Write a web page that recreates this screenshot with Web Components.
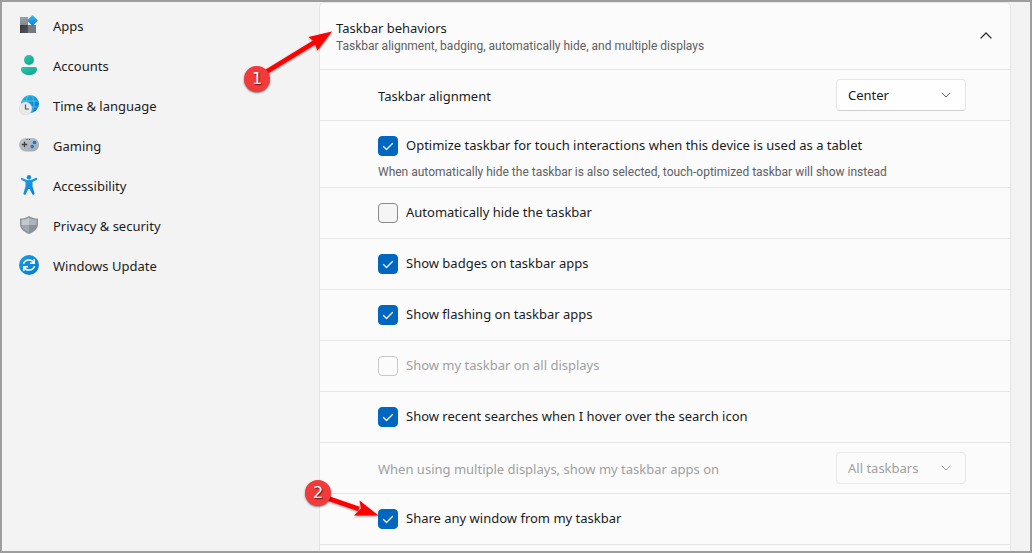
<!DOCTYPE html>
<html lang="en">
<head>
<meta charset="utf-8">
<title>Settings - Taskbar</title>
<style>
  html, body { margin: 0; height: 100%; }
  body { font: 13px/20px "Noto Sans", "Open Sans", sans-serif; color: #1b1b1b; background: #f3f3f3; overflow: hidden; }
</style>
</head>
<body>
<settings-window>
  <nav-item slot="nav" icon="apps">Apps</nav-item>
  <nav-item slot="nav" icon="accounts">Accounts</nav-item>
  <nav-item slot="nav" icon="time">Time &amp; language</nav-item>
  <nav-item slot="nav" icon="gaming">Gaming</nav-item>
  <nav-item slot="nav" icon="access">Accessibility</nav-item>
  <nav-item slot="nav" icon="privacy">Privacy &amp; security</nav-item>
  <nav-item slot="nav" icon="update">Windows Update</nav-item>

  <settings-expander heading="Taskbar behaviors" note="Taskbar alignment, badging, automatically hide, and multiple displays">
    <select-setting label="Taskbar alignment" options="Center|Left"></select-setting>
    <check-setting checked label="Optimize taskbar for touch interactions when this device is used as a tablet" note="When automatically hide the taskbar is also selected, touch-optimized taskbar will show instead"></check-setting>
    <check-setting label="Automatically hide the taskbar"></check-setting>
    <check-setting checked label="Show badges on taskbar apps"></check-setting>
    <check-setting checked label="Show flashing on taskbar apps"></check-setting>
    <check-setting disabled label="Show my taskbar on all displays"></check-setting>
    <check-setting checked label="Show recent searches when I hover over the search icon"></check-setting>
    <select-setting disabled label="When using multiple displays, show my taskbar apps on" options="All taskbars"></select-setting>
    <check-setting checked label="Share any window from my taskbar"></check-setting>
    <step-marker slot="markers" class="one" step="1"></step-marker>
    <step-marker slot="markers" class="two" step="2"></step-marker>
  </settings-expander>
</settings-window>

<script>
const ICONS = {
  apps: `<defs><linearGradient id="a" x2="0" y2="1"><stop stop-color="#9aa0a8"/><stop offset="1" stop-color="#838990"/></linearGradient><linearGradient id="b" y2="1"><stop stop-color="#33c1f5"/><stop offset="1" stop-color="#0a79d8"/></linearGradient><linearGradient id="c" y2="1"><stop stop-color="#34363a"/><stop offset="1" stop-color="#55585d"/></linearGradient></defs>
    <path fill="url(#a)" d="M1 2h8v8H1z"/><path fill="url(#c)" d="M1 10h8v8H1z"/><path fill="#747a82" d="M9 10h8v8H9z"/><rect x="9.600" y="1.600" width="7.800" height="7.800" rx=".8" fill="url(#b)" transform="rotate(45 13.500 5.500)"/>`,
  accounts: `<defs><linearGradient id="a" x2="1" y2="1"><stop stop-color="#2cc7b0"/><stop offset="1" stop-color="#10a38b"/></linearGradient></defs>
    <circle cx="10" cy="5" r="5" fill="url(#a)"/><path fill="url(#a)" d="M4 12h12a2 2 0 0 1 2 2c0 4-4 6-8 6s-8-2-8-6a2 2 0 0 1 2-2z"/>`,
  time: `<defs><linearGradient id="a" x2="1" y2="1"><stop stop-color="#23b7e6"/><stop offset="1" stop-color="#0872c9"/></linearGradient></defs>
    <circle cx="11" cy="9" r="9" fill="url(#a)"/><g fill="none" stroke="#5fd8f3" stroke-width=".7"><ellipse cx="11" cy="9" rx="4" ry="9"/><path d="M3 6h16M3 12h16"/></g>
    <circle cx="6.500" cy="13.500" r="6.500" fill="#e9e9ea" stroke="#cfcfd1" stroke-width=".4"/><path d="M6.500 9.500v4.500h3.500" fill="none" stroke="#54565a" stroke-width="1.200"/>`,
  gaming: `<defs><linearGradient id="a" y2="1"><stop stop-color="#c3c8cf"/><stop offset="1" stop-color="#a0a6ae"/></linearGradient></defs>
    <rect y="3" width="20" height="13.500" rx="6.500" fill="url(#a)"/><path d="M2.800 9.500h5.400M5.500 6.800v5.400" stroke="#3c3f44" stroke-width="1.300"/><circle cx="15.500" cy="7.500" r="1.800" fill="#1078cf"/><circle cx="13.200" cy="11.500" r="1.700" fill="#1078cf"/><path d="M7.500 4.500h1M10 4.500h1" stroke="#44474c"/>`,
  access: `<defs><linearGradient id="a" y2="1"><stop stop-color="#25a3e8"/><stop offset="1" stop-color="#087bd4"/></linearGradient></defs>
    <circle cx="10" cy="2.200" r="2.200" fill="#128ade"/><path fill="url(#a)" d="M3.300 2.900L8 5h4l4.700-2.100c1.400-.5 2 1.400.8 2L13.500 7v4.200l2 7c.3 1.600-1.700 2.300-2.300.8L10.600 14H9.400l-2.600 5c-.6 1.500-2.600.8-2.300-.8l2-7V7l-4-2.100c-1.200-.6-.6-2.500.8-2z"/>`,
  privacy: `<path fill="#8b929a" d="M10 1c3 2 6 2.500 9 2.500V9c0 5-4 8-9 10-5-2-9-5-9-10V3.500C4 3.500 7 3 10 1z"/><path fill="#aeb4bb" d="M10 2.800c2 1.300 4.800 1.900 7.500 2V10H10z"/><path fill="#c3c8cd" d="M10 2.800v7.200H2.500V4.800c2.700-.1 5.500-.7 7.500-2z"/><path fill="#a1a7af" d="M2.500 10H10v7.400C6 15.800 3 13.500 2.500 10z"/><path fill="#8a9199" d="M17.500 10H10v7.400c4-1.600 7-3.900 7.500-7.400z"/>`,
  update: `<defs><linearGradient id="a" x2="1" y2="1"><stop stop-color="#18a0e4"/><stop offset="1" stop-color="#0877d0"/></linearGradient></defs>
    <circle cx="10" cy="10" r="10" fill="url(#a)"/><g fill="none" stroke="#fff" stroke-width="1.500"><path d="M4.500 8.700C5.500 6 7.500 4.900 10 4.900c2 0 3.700 1 4.700 2.800M15.200 4v4.300H11M15.500 11.300c-1 2.700-3 3.800-5.500 3.800-2 0-3.700-1-4.700-2.800M4.800 16v-4.300H9"/></g>`
};

const CHEVRON_DOWN = `<svg viewBox="0 0 10 6" aria-hidden="true"><path d="M1 1l4 4 4-4" fill="none" stroke="currentColor" stroke-linecap="round"/></svg>`;

class BaseElement extends HTMLElement {
  connectedCallback() {
    if (this.shadowRoot) return;
    this.attachShadow({ mode: "open" }).innerHTML = this.render();
  }
  attr(name) { return this.getAttribute(name) || ""; }
}

customElements.define("settings-window", class extends BaseElement {
  render() {
    return `<style>
      :host { display: flex; box-sizing: border-box; height: 100vh; overflow: hidden; border: 2px solid #9d9d9d; }
      nav { flex: 0 0 317px; padding-top: 4px; }
      main { flex: 1; min-width: 0; padding-right: 19px; }
    </style>
    <nav aria-label="Settings"><slot name="nav"></slot></nav>
    <main><slot></slot></main>`;
  }
});

customElements.define("nav-item", class extends BaseElement {
  render() {
    return `<style>
      :host { display: block; }
      a { display: flex; align-items: center; gap: 14px; height: 40px; padding-left: 17px; color: inherit; text-decoration: none; }
      svg { width: 20px; height: 20px; margin-bottom: 2px; }
    </style>
    <a href="#${this.attr("icon")}"><svg viewBox="0 0 20 20" aria-hidden="true">${ICONS[this.attr("icon")]}</svg><span><slot></slot></span></a>`;
  }
});

customElements.define("settings-expander", class extends BaseElement {
  render() {
    return `<style>
      :host { display: block; position: relative; min-height: 100vh; box-sizing: border-box; background: #fbfbfb; border: 1px solid #e5e5e5; border-radius: 5px; }
      button { display: flex; align-items: center; justify-content: space-between; width: 100%; box-sizing: border-box; height: 67px; padding: 0 18px 0 16px; border: 0; border-bottom: 1px solid #e5e5e5; background: none; font: inherit; color: inherit; text-align: left; }
      .text { display: grid; }
      .note { font: 12px/16px Roboto, sans-serif; color: #606060; }
      svg { width: 12px; height: 8px; color: #333; }
      ::slotted(step-marker) { position: absolute; }
      ::slotted(.one) { left: -76px; top: 25px; }
      ::slotted(.two) { left: -15px; top: 477px; }
    </style>
    <button type="button" aria-expanded="true"><span class="text"><span>${this.attr("heading")}</span><span class="note">${this.attr("note")}</span></span>
      <svg viewBox="0 0 12 8" aria-hidden="true"><path d="M1 6l5-5 5 5" fill="none" stroke="currentColor" stroke-width="1.300" stroke-linecap="round"/></svg></button>
    <slot></slot><slot name="markers"></slot>`;
  }
});

const ROW = `:host { display: flex; box-sizing: border-box; min-height: 51px; padding: 0 44px 0 58px; border-bottom: 1px solid #e5e5e5; }
  :host([disabled]) { color: #a0a0a0; }`;

customElements.define("check-setting", class extends BaseElement {
  render() {
    const note = this.attr("note");
    return `<style>${ROW}
      :host { flex-direction: column; justify-content: center; gap: 8px; }
      :host([note]) { min-height: 67px; padding-top: 8px; }
      .line { display: flex; align-items: center; gap: 8px; }
      label { padding-bottom: 2px; line-height: 18px; }
      input { appearance: none; flex: none; width: 20px; height: 20px; margin: 0; border: 1px solid #8a8a8a; border-radius: 4px; background: #f5f5f5; }
      input:disabled { border-color: #c8c8c8; background: #fbfbfb; }
      input:checked { border-color: #0067c0; background: #0067c0 url("data:image/svg+xml,%3Csvg xmlns='http://www.w3.org/2000/svg' viewBox='0 0 18 18'%3E%3Cpath d='M4.500 9.500l3 3 6-6' fill='none' stroke='white' stroke-width='1.200' stroke-linecap='round' stroke-linejoin='round'/%3E%3C/svg%3E") center / 18px no-repeat; }
      .note { font: 12px/16px Roboto, sans-serif; color: #606060; }
    </style>
    <div class="line"><input type="checkbox" id="box"${this.hasAttribute("checked") ? " checked" : ""}${this.hasAttribute("disabled") ? " disabled" : ""}><label for="box">${this.attr("label")}</label></div>
    ${note ? `<div class="note">${note}</div>` : ""}`;
  }
});

customElements.define("select-setting", class extends BaseElement {
  render() {
    const options = this.attr("options").split("|").map(o => `<option>${o}</option>`).join("");
    return `<style>${ROW}
      :host { align-items: center; justify-content: space-between; }
      .field { display: grid; align-items: center; }
      select, svg { grid-area: 1 / 1; }
      label { padding-top: 2px; }
      select { appearance: none; width: 130px; height: 32px; padding: 0 11px; border: 1px solid #e5e5e5; border-bottom-color: #cfcfcf; border-radius: 4px; background: #fefefe; font: inherit; color: inherit; }
      select:disabled { background: #fbfbfb; border-color: #e8e8e8; opacity: 1; }
      svg { justify-self: end; width: 10px; height: 6px; margin-right: 15px; color: #666; pointer-events: none; }
      :host([disabled]) svg { color: #a0a0a0; }
    </style>
    <label for="choice">${this.attr("label")}</label>
    <div class="field"><select id="choice"${this.hasAttribute("disabled") ? " disabled" : ""}>${options}</select>${CHEVRON_DOWN}</div>`;
  }
});

/* Numbered callout with an arrow that points at the control to use. */
const ARROWS = {
  "1": `<path d="M22 44L71 14" stroke="#f00" stroke-width="4.500"/><path fill="#f00" d="M88 3.500L64.500 9 70 13.500 73.500 22.500z"/>`,
  "2": `<path d="M22 18L54 29" stroke="#f00" stroke-width="4.500"/><path fill="#f00" d="M73.500 35.500L54.500 20.500 56 28.500 49 35.500z"/>`
};
customElements.define("step-marker", class extends BaseElement {
  render() {
    const step = this.attr("step");
    return `<style>
      :host { display: block; width: 88px; height: 64px; pointer-events: none; }
      :host([step="2"]) { height: 36px; }
      svg { position: absolute; left: 0; top: 0; width: 100%; height: 100%; overflow: visible; filter: drop-shadow(0 1px 1px #0006); }
      span { position: absolute; left: 0; bottom: 0; width: 26px; height: 26px; border-radius: 50%; background: #f23a3a; box-shadow: 0 1px 2px #0008; color: #fff; font: 16px/26px "DejaVu Sans", sans-serif; text-align: center; text-shadow: 1px 1px 1px #0009; }
      :host([step="2"]) span { top: 0; bottom: auto; }
    </style>
    <svg aria-hidden="true">${ARROWS[step]}</svg><span>${step}</span>`;
  }
});
</script>
</body>
</html>
